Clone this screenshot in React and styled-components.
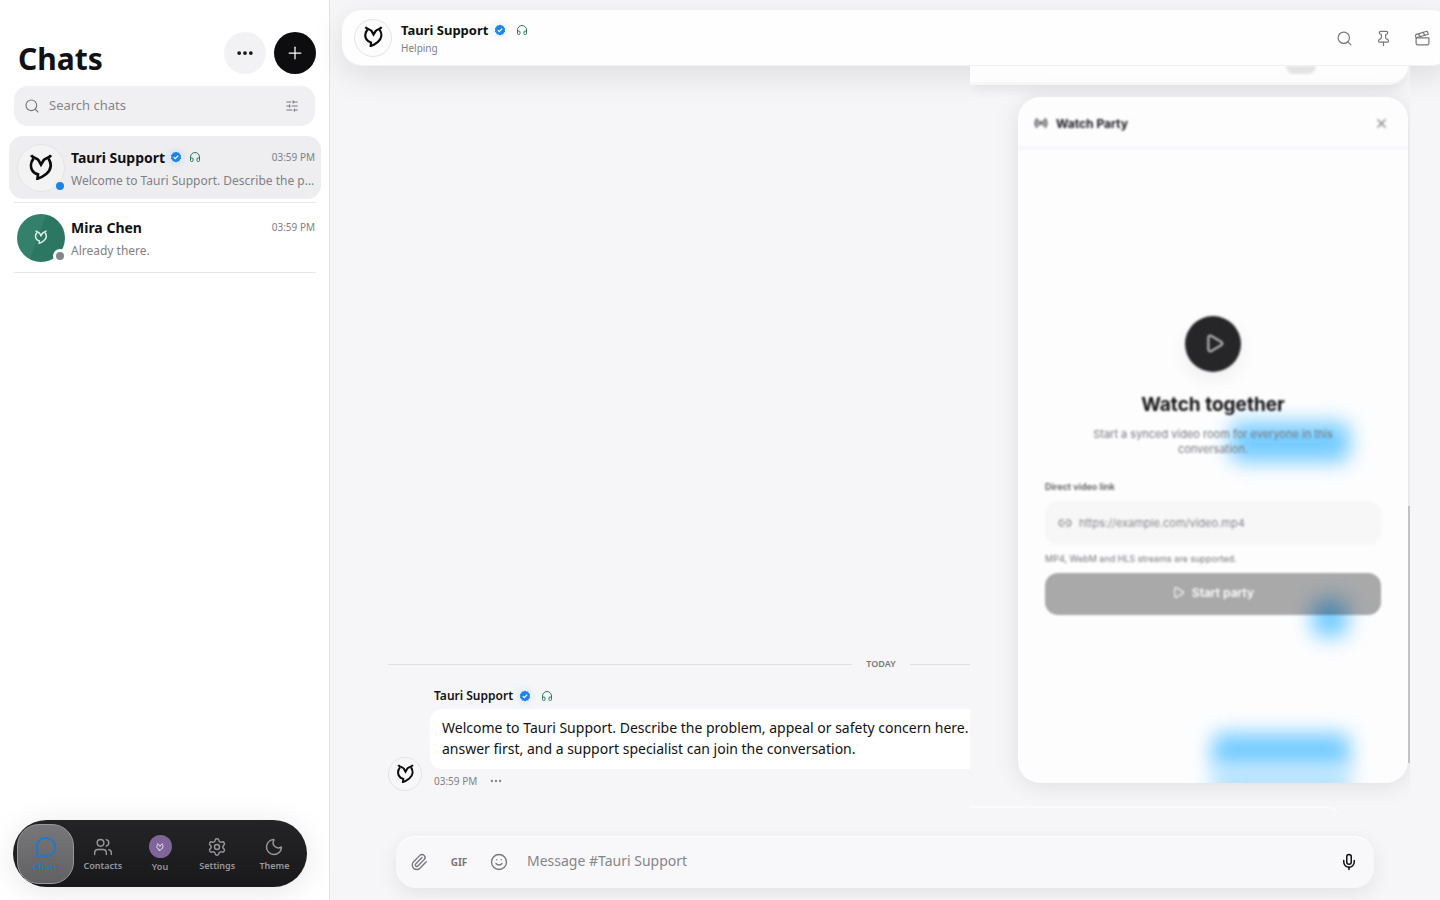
import styled, { createGlobalStyle } from "styled-components";
import {
  Search,
  Pin,
  Clapperboard,
  Headphones,
  Plus,
  Ellipsis,
  SlidersHorizontal,
  MessageCircle,
  Users,
  Settings,
  Moon,
  Paperclip,
  Smile,
  Mic,
  Play,
  X,
  Radio,
  Link2,
} from "lucide-react";

const chats = [
  {
    name: "Tauri Support",
    text: "Welcome to Tauri Support. Describe the p...",
    time: "03:59 PM",
    official: true,
    active: true,
  },
  { name: "Mira Chen", text: "Already there.", time: "03:59 PM" },
];

function Logo({ size }) {
  return (
    <svg width={size} height={size} viewBox="0 0 24 24" fill="none" stroke="currentColor" strokeWidth="2.5">
      <path d="M2.800 1.200C5 4.300 8.600 3.600 9.800 5.800L12 9.800l2.400-4c1.300-2.200 4.800-1.500 6.900-4.600" />
      <path d="M5 4.300C2.200 8 2.300 12.500 4 15.300c1.100 1.900 2.900 2.900 5.200 3.500L8.800 22.700c3.200-.8 5.800-2.500 8-4.300C22 14.200 21.800 8.500 19 4.300" />
    </svg>
  );
}

function Verified({ size }) {
  return (
    <Badge viewBox="0 0 24 24" width={size} height={size}>
      <path
        fill="#1c83e8"
        d="M12 1l2.900 2.100 3.600-.1 1 3.400 3 2-1.200 3.600 1.200 3.600-3 2-1 3.400-3.600-.1L12 23l-2.900-2.100-3.600.1-1-3.400-3-2L2.700 12 1.500 8.400l3-2 1-3.400 3.600.1z"
      />
      <path d="M7.500 12.300l3 3 6-6" fill="none" stroke="#fff" strokeWidth="2.600" />
    </Badge>
  );
}

function Official({ size }) {
  return (
    <>
      <Verified size={size} />
      <Headphones size={size} color="#2c7a5b" strokeWidth={2} />
    </>
  );
}

export default function App() {
  return (
    <>
      <GlobalStyle />
      <Shell>
        <Sidebar>
          <SidebarHead>
            <h1>Chats</h1>
            <RoundButton aria-label="More">
              <Ellipsis size={20} strokeWidth={2.5} />
            </RoundButton>
            <RoundButton $dark aria-label="New chat">
              <Plus size={20} strokeWidth={1.5} />
            </RoundButton>
          </SidebarHead>
          <SearchBox>
            <Search size={16} strokeWidth={1.7} />
            <input type="text" placeholder="Search chats" aria-label="Search chats" />
            <SlidersHorizontal size={14} strokeWidth={1.8} />
          </SearchBox>
          <ChatList>
            {chats.map((chat) => (
              <li key={chat.name}>
                <ChatRow $active={chat.active}>
                  <Avatar $size={48} $green={!chat.official}>
                    <Logo size={chat.official ? 26 : 14} />
                    <Presence $active={chat.active} />
                  </Avatar>
                  <ChatInfo>
                    <ChatTop>
                      <strong>{chat.name}</strong>
                      {chat.official && <Official size={12} />}
                      <time>{chat.time}</time>
                    </ChatTop>
                    <p>{chat.text}</p>
                  </ChatInfo>
                </ChatRow>
              </li>
            ))}
          </ChatList>
          <Nav>
            <NavItem $active>
              <MessageCircle size={22} strokeWidth={2} />
              Chats
            </NavItem>
            <NavItem>
              <Users size={20} strokeWidth={1.7} />
              Contacts
            </NavItem>
            <NavItem>
              <NavAvatar>
                <Logo size={8} />
              </NavAvatar>
              You
            </NavItem>
            <NavItem>
              <Settings size={20} strokeWidth={1.7} />
              Settings
            </NavItem>
            <NavItem>
              <Moon size={20} strokeWidth={1.7} />
              Theme
            </NavItem>
          </Nav>
        </Sidebar>

        <Main>
          <Header>
            <Avatar $size={38}>
              <Logo size={21} />
            </Avatar>
            <HeaderInfo>
              <HeaderName>
                <strong>Tauri Support</strong>
                <Official size={12} />
              </HeaderName>
              <span>Helping</span>
            </HeaderInfo>
            <HeaderButtons>
              <IconButton aria-label="Search">
                <Search size={17} strokeWidth={1.7} />
              </IconButton>
              <IconButton aria-label="Pinned">
                <Pin size={17} strokeWidth={1.7} />
              </IconButton>
              <IconButton aria-label="Watch party">
                <Clapperboard size={17} strokeWidth={1.7} />
              </IconButton>
            </HeaderButtons>
          </Header>

          <Messages>
            <Day>TODAY</Day>
            <Message>
              <Avatar $size={34}>
                <Logo size={19} />
              </Avatar>
              <MessageBody>
                <Author>
                  <strong>Tauri Support</strong>
                  <Official size={12} />
                </Author>
                <Bubble>
                  Welcome to Tauri Support. Describe the problem, appeal or safety concern here.
                  <br />
                  answer first, and a support specialist can join the conversation.
                </Bubble>
                <Meta>
                  <time>03:59 PM</time>
                  <Ellipsis size={14} strokeWidth={2} />
                </Meta>
              </MessageBody>
            </Message>
          </Messages>

          <Composer>
            <IconButton aria-label="Attach">
              <Paperclip size={18} strokeWidth={1.8} />
            </IconButton>
            <IconButton>GIF</IconButton>
            <IconButton aria-label="Emoji">
              <Smile size={18} strokeWidth={1.8} />
            </IconButton>
            <input type="text" placeholder="Message #Tauri Support" aria-label="Message" />
            <IconButton $dark aria-label="Voice message">
              <Mic size={18} strokeWidth={2} />
            </IconButton>
          </Composer>

          <Overlay>
            <OverlayBar>
              <i />
            </OverlayBar>
            <Party>
              <Glow $top={325} $right={58} $width={120} $height={40} />
              <Glow $top={502} $right={60} $width={36} $height={38} />
              <Glow $top={636} $right={58} $width={138} $height={36} />
              <Glow $top={670} $right={58} $width={138} $height={30} $pale />
              <PartyHead>
                <Radio size={14} strokeWidth={2.5} />
                <h2>Watch Party</h2>
                <IconButton aria-label="Close">
                  <X size={15} strokeWidth={1.7} />
                </IconButton>
              </PartyHead>
              <PartyBody>
                <PlayCircle>
                  <Play size={21} strokeWidth={2} />
                </PlayCircle>
                <h3>Watch together</h3>
                <p>Start a synced video room for everyone in this conversation.</p>
                <label htmlFor="link">Direct video link</label>
                <LinkBox>
                  <Link2 size={14} strokeWidth={2.5} />
                  <input id="link" type="text" placeholder="https://example.com/video.mp4" />
                </LinkBox>
                <small>MP4, WebM and HLS streams are supported.</small>
                <StartButton>
                  <Play size={13} strokeWidth={2} />
                  Start party
                </StartButton>
              </PartyBody>
            </Party>
            <Thumb />
            <OverlayFoot />
          </Overlay>
        </Main>
      </Shell>
    </>
  );
}

const GlobalStyle = createGlobalStyle`
  * {
    box-sizing: border-box;
  }
  body {
    margin: 0;
    font-family: "Noto Sans", sans-serif;
    color: #111113;
    background: #f6f6f8;
  }
  h1, h2, h3, p, ul {
    margin: 0;
    padding: 0;
  }
  button, input {
    font-family: inherit;
    border: none;
    background: none;
    padding: 0;
    outline: none;
  }
  button {
    cursor: pointer;
  }
  input::placeholder {
    color: #85858a;
    opacity: 1;
  }
`;

const Shell = styled.div`
  display: grid;
  grid-template-columns: 330px minmax(0, 1fr);
  height: 100vh;
  overflow: hidden;
`;

const Sidebar = styled.aside`
  display: flex;
  flex-direction: column;
  background: #fff;
  border-right: 1px solid #e3e3e6;
  padding: 32px 13px 13px 14px;
`;

const SidebarHead = styled.div`
  display: flex;
  gap: 8px;
  height: 54px;
  h1 {
    flex: 1;
    padding: 6px 4px;
    font-size: 30px;
    line-height: 42px;
  }
`;

const RoundButton = styled.button`
  display: flex;
  align-items: center;
  justify-content: center;
  width: 42px;
  height: 42px;
  border-radius: 50%;
  color: ${(props) => (props.$dark ? "#fff" : "#111113")};
  background: ${(props) => (props.$dark ? "#0d0d0f" : "#f2f2f4")};
`;

const SearchBox = styled.div`
  display: flex;
  align-items: center;
  gap: 9px;
  height: 40px;
  padding: 0 16px 0 10px;
  margin: 0 1px 10px 0;
  border-radius: 14px;
  background: #f0f0f2;
  color: #77777c;
  input {
    flex: 1;
    min-width: 0;
    padding-bottom: 2px;
    font-size: 13px;
  }
`;

const ChatList = styled.ul`
  flex: 1;
  list-style: none;
  li {
    height: 70px;
    border-bottom: 1px solid #e8e8eb;
  }
  li:first-child {
    height: 67px;
  }
  li:last-child {
    padding-top: 3px;
  }
`;

const ChatRow = styled.div`
  display: flex;
  align-items: center;
  gap: 6px;
  height: 63px;
  margin: 0 -5px;
  padding: 0 6px 0 8px;
  border-radius: 14px;
  background: ${(props) => (props.$active ? "#eeeef0" : "none")};
`;

const Avatar = styled.div`
  position: relative;
  display: flex;
  align-items: center;
  justify-content: center;
  flex: none;
  width: ${(props) => props.$size}px;
  height: ${(props) => props.$size}px;
  padding-bottom: 2px;
  border-radius: 50%;
  border: 1px solid ${(props) => (props.$green ? "transparent" : "#e4e4e7")};
  color: ${(props) => (props.$green ? "#d9f5ea" : "#0b0b0c")};
  background: ${(props) =>
    props.$green ? "linear-gradient(110deg, #35806b 45%, #2b7762 45%) border-box" : "rgba(250, 250, 251, 0.4)"};
`;

const Presence = styled.span`
  position: absolute;
  right: -3px;
  bottom: -2px;
  width: 14px;
  height: 14px;
  border-radius: 50%;
  border: 3px solid ${(props) => (props.$active ? "#eeeef0" : "#fff")};
  background: ${(props) => (props.$active ? "#1c83e8" : "#85858c")};
`;

const ChatInfo = styled.div`
  flex: 1;
  min-width: 0;
  padding-top: 2px;
  p {
    font-size: 12px;
    line-height: 23px;
    color: #808085;
    white-space: nowrap;
  }
`;

const ChatTop = styled.div`
  display: flex;
  align-items: center;
  gap: 5px;
  font-size: 14px;
  line-height: 23px;
  svg + svg {
    margin-left: 2px;
  }
  time {
    margin-left: auto;
    font-size: 10px;
    color: #808085;
  }
`;

const Badge = styled.svg`
  border-radius: 50%;
  box-shadow: 0 0 8px rgba(28, 131, 232, 0.2);
`;

const Nav = styled.nav`
  display: flex;
  align-items: center;
  height: 67px;
  margin: 0 9px 0 -1px;
  padding: 0 4px;
  border-radius: 34px;
  background: linear-gradient(#242426, #19191b);
  box-shadow: 0 4px 30px rgba(0, 0, 0, 0.1);
`;

const NavItem = styled.button`
  display: flex;
  flex-direction: column;
  align-items: center;
  justify-content: center;
  gap: 2px;
  flex: 1;
  min-width: 0;
  height: 60px;
  padding-top: 2px;
  border-radius: 22px;
  font-size: 9px;
  font-weight: 600;
  line-height: 14px;
  color: ${(props) => (props.$active ? "#1c78d4" : "#98989b")};
  border: 1px solid ${(props) => (props.$active ? "#98989a" : "transparent")};
  background: ${(props) => (props.$active ? "linear-gradient(#77777a, #616164)" : "none")};
`;

const NavAvatar = styled.span`
  display: flex;
  align-items: center;
  justify-content: center;
  width: 23px;
  height: 23px;
  border-radius: 50%;
  color: #fff;
  background: #80659b;
`;

const Main = styled.main`
  position: relative;
  display: flex;
  flex-direction: column;
  padding: 10px 0 12px;
  background: #f6f6f8;
`;

const Header = styled.header`
  display: flex;
  align-items: center;
  flex: none;
  gap: 9px;
  height: 56px;
  margin: 0 -12px 0 12px;
  padding: 0 20px 0 12px;
  border-radius: 20px;
  background: #fefefe;
  border-bottom: 1px solid #f0f0f2;
  box-shadow: 0 10px 32px rgba(0, 0, 0, 0.1);
`;

const HeaderInfo = styled.div`
  flex: 1;
  > span {
    display: block;
    font-size: 10px;
    line-height: 16px;
    color: #808085;
  }
`;

const HeaderName = styled.div`
  display: flex;
  align-items: center;
  gap: 6px;
  font-size: 13px;
  line-height: 20px;
  svg + svg {
    margin-left: 4px;
  }
`;

const HeaderButtons = styled.div`
  display: flex;
  gap: 19px;
  padding-top: 2px;
`;

const IconButton = styled.button`
  display: flex;
  align-items: center;
  justify-content: center;
  min-width: 20px;
  height: 20px;
  font-size: 10px;
  font-weight: 700;
  color: ${(props) => (props.$dark ? "#111113" : "#77777c")};
`;

const Messages = styled.section`
  display: flex;
  flex-direction: column;
  justify-content: flex-end;
  flex: 1;
  padding: 0 66px 45px 58px;
`;

const Day = styled.div`
  display: flex;
  align-items: center;
  gap: 14px;
  margin-bottom: 14px;
  font-size: 9px;
  font-weight: 600;
  line-height: 16px;
  color: #77777c;
  &::before,
  &::after {
    content: "";
    flex: 1;
    height: 1px;
    background: #e0e0e3;
  }
`;

const Message = styled.article`
  display: flex;
  align-items: flex-end;
  gap: 8px;
`;

const MessageBody = styled.div`
  width: 620px;
`;

const Author = styled.div`
  display: flex;
  align-items: center;
  gap: 6px;
  padding: 0 4px;
  margin-bottom: 3px;
  font-size: 12px;
  line-height: 20px;
  strong {
    font-weight: 600;
  }
  svg + svg {
    margin-left: 4px;
  }
`;

const Bubble = styled.p`
  padding: 8px 12px 10px;
  border-radius: 12px;
  font-size: 14px;
  line-height: 21px;
  background: #fff;
`;

const Meta = styled.div`
  display: flex;
  align-items: center;
  gap: 12px;
  height: 22px;
  padding: 2px 4px 0;
  font-size: 10px;
  color: #808085;
`;

const Composer = styled.div`
  position: relative;
  z-index: 2;
  display: flex;
  align-items: center;
  flex: none;
  gap: 20px;
  height: 52px;
  margin: 0 66px;
  padding: 0 15px 0 13px;
  border-radius: 20px;
  background: #f8f8fa;
  box-shadow: 0 6px 20px rgba(0, 0, 0, 0.08), inset 0 1px 0 #fff;
  input {
    flex: 1;
    min-width: 0;
    margin-left: -2px;
    padding-bottom: 3px;
    font-size: 14px;
  }
`;

const Overlay = styled.section`
  position: absolute;
  top: 66px;
  right: 30px;
  bottom: 64px;
  display: flex;
  flex-direction: column;
  width: 440px;
  overflow: hidden;
  background: #f6f6f8;
  font-family: Inter, sans-serif;
`;

const OverlayBar = styled.div`
  display: flex;
  justify-content: flex-end;
  flex: none;
  height: 19px;
  margin-right: 2px;
  padding-right: 92px;
  border-radius: 0 0 20px 0;
  border-bottom: 3px solid #f7f7f8;
  background: #fdfdfe;
  box-shadow: 0 3px 14px rgba(0, 0, 0, 0.1);
  i {
    width: 30px;
    height: 8px;
    border-radius: 0 0 15px 15px;
    background: #e4e4e7;
    filter: blur(1px);
  }
`;

const Party = styled.div`
  position: relative;
  display: flex;
  flex-direction: column;
  flex: 1;
  margin: 12px 2px 0 48px;
  border-radius: 22px;
  background: #fdfdfe;
  box-shadow: 0 2px 24px rgba(0, 0, 0, 0.1);
  overflow: hidden;
`;

const Glow = styled.span`
  position: absolute;
  top: ${(props) => props.$top}px;
  right: ${(props) => props.$right}px;
  width: ${(props) => props.$width}px;
  height: ${(props) => props.$height}px;
  border-radius: 10px;
  background: ${(props) => (props.$pale ? "#b4e1ff" : "#74ccff")};
  filter: blur(10px);
`;

const PartyHead = styled.div`
  position: relative;
  display: flex;
  align-items: center;
  gap: 8px;
  height: 52px;
  padding: 2px 17px 0 16px;
  border-bottom: 2px solid #f3f3f5;
  color: #55555a;
  filter: blur(1px);
  h2 {
    flex: 1;
    font-size: 12px;
    font-weight: 700;
    color: #18181b;
  }
`;

const PartyBody = styled.div`
  position: relative;
  display: flex;
  flex-direction: column;
  justify-content: center;
  flex: 1;
  padding: 0 27px 2px;
  filter: blur(1px);
  h3 {
    margin: 21px 0 10px;
    font-size: 19px;
    line-height: 24px;
    text-align: center;
  }
  p {
    width: 260px;
    margin: 0 auto 23px;
    font-size: 11px;
    line-height: 15px;
    text-align: center;
    color: #77777c;
  }
  label {
    margin-bottom: 7px;
    font-size: 9px;
    font-weight: 600;
    line-height: 14px;
    color: #55555a;
  }
  small {
    margin: 7px 0;
    font-size: 9px;
    line-height: 14px;
    color: #77777c;
  }
`;

const PlayCircle = styled.div`
  display: flex;
  align-items: center;
  justify-content: center;
  align-self: center;
  width: 56px;
  height: 56px;
  padding-left: 3px;
  border-radius: 50%;
  color: #d8d8da;
  background: #262628;
  box-shadow: 0 8px 20px rgba(0, 0, 0, 0.06);
`;

const LinkBox = styled.div`
  display: flex;
  align-items: center;
  gap: 7px;
  height: 44px;
  padding: 0 13px;
  border-radius: 13px;
  background: rgba(245, 245, 245, 0.8);
  color: #99999c;
  input {
    flex: 1;
    font-size: 11px;
  }
`;

const StartButton = styled.button`
  display: flex;
  align-items: center;
  justify-content: center;
  gap: 7px;
  height: 42px;
  padding-bottom: 2px;
  border-radius: 13px;
  font-size: 12px;
  font-weight: 600;
  color: #fff;
  background: rgba(20, 20, 22, 0.36);
`;

const Thumb = styled.span`
  position: absolute;
  top: 440px;
  right: 0;
  bottom: 73px;
  width: 2px;
  background: #c2c2c4;
`;

const OverlayFoot = styled.div`
  flex: none;
  height: 30px;
  margin: 23px 66px 0 0;
  border-radius: 0 20px 0 0;
  border-top: 2px solid #fafafb;
`;
